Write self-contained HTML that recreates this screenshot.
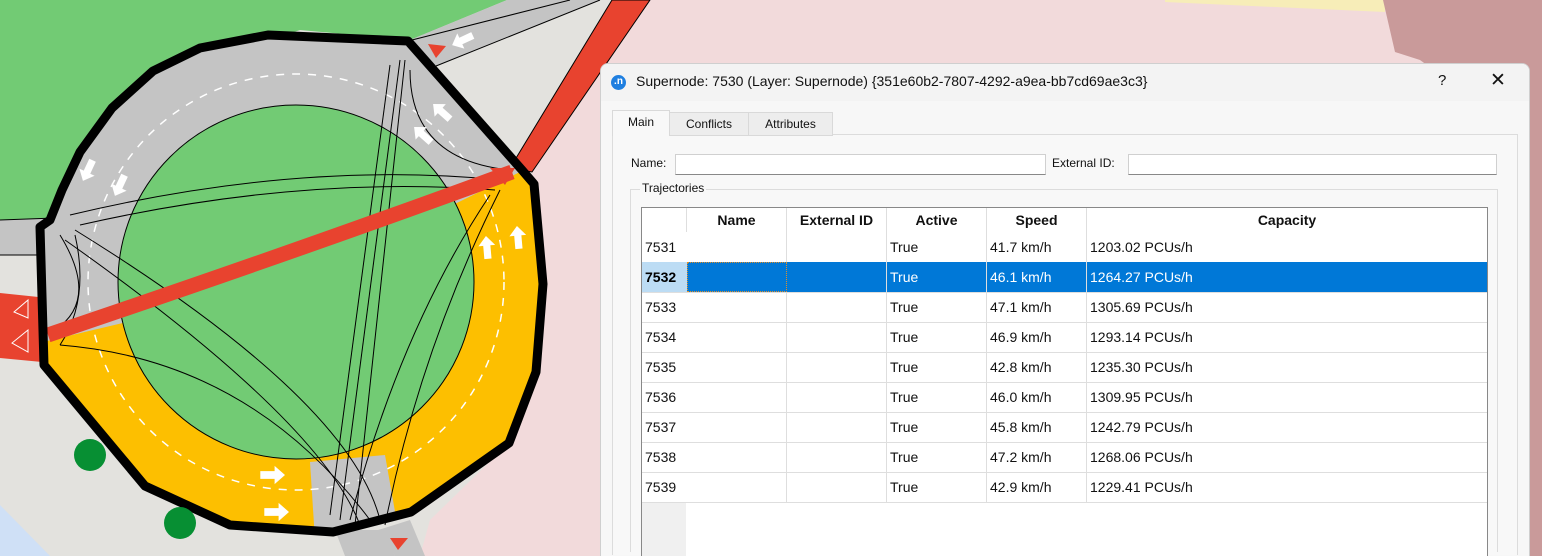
<!DOCTYPE html>
<html><head><meta charset="utf-8"><style>
html,body{margin:0;width:1542px;height:556px;overflow:hidden}
body{position:relative;font-family:"Segoe UI","Liberation Sans",sans-serif;background:#e3e2de}
svg{position:absolute;left:0;top:0}
.dlg{position:absolute;left:600px;top:63px;width:930px;height:493px;background:#f7f7f7;border-radius:8px 8px 0 0;border:1px solid #cfcfcf;border-bottom:none;box-sizing:border-box;overflow:hidden;font-size:12.5px;color:#111}
.tb{height:37px;background:#f3f3f3;position:relative}
.tb .t{position:absolute;left:35px;top:9px;font-size:14px}
.ic{position:absolute;left:10px;top:11px;width:15px;height:15px;border-radius:50%;background:#1f7fe0;color:#fff;font-size:10px;line-height:14px;text-align:center;font-weight:bold}
.tab{position:absolute;top:48px;height:22px;border:1px solid #d9d9d9;background:#ededed;line-height:22px;text-align:center;font-size:12px}
.pane{position:absolute;left:11px;top:70px;width:904px;height:420px;border:1px solid #dcdcdc;border-bottom:none;background:#f8f8f8}
.inp{position:absolute;top:90px;height:19px;background:#fff;border:1px solid #d0d0d0;border-bottom-color:#888}
.lbl{position:absolute;top:92px;font-size:12px}
.grp{position:absolute;left:29px;top:125px;width:866px;height:362px;border:1px solid #dcdcdc;border-bottom:none}
.tbl{position:absolute;left:40px;top:143px;width:845px;height:348px;background:#fff;border:1px solid #888;border-bottom:none;overflow:hidden}
.row{position:absolute;left:0;height:30px;width:845px;border-bottom:1px solid #dedede}
.c{position:absolute;top:0;height:30px;line-height:30px;font-size:14px;border-right:1px solid #dedede;box-sizing:border-box;padding-left:3px}
.h{font-weight:bold;text-align:center;padding:0;line-height:24px}
</style></head><body>
<svg width="1542" height="556" viewBox="0 0 1542 556">
<defs>
<clipPath id="oct"><polygon points="40,227 44,365 145,486 230,525 333,532 411,512 509,443 536,372 543,284 534,184 522,170 408,41 268,35 200,48 153,71 112,108 80,152 62,190 50,220"/></clipPath>
<polygon id="ar" points="-9,-3 2,-3 2,-7 10,0 2,7 2,3 -9,3" fill="#fff"/>
</defs>
<rect width="1542" height="556" fill="#e3e2de"/>
<polygon points="650,0 1542,0 1542,556 420,556 430,520 509,443 536,372 543,284 534,184 532,172" fill="#f2dadb"/>
<polygon points="1165,0 1385,0 1385,12 1165,2" fill="#f7edb8"/>
<polygon points="1383,0 1542,0 1542,556 1530,556 1530,140 1420,60 1395,52" fill="#c99a9a"/>
<polygon points="0,0 507,0 410,40 300,30 150,80 70,170 48,222 0,222" fill="#72cb74"/>
<polygon points="507,0 600,0 436,66 405,42" fill="#c4c4c4"/>
<path d="M408,41 L570,0 M436,66 L600,0" stroke="#000" stroke-width="1"/>
<polygon points="0,220 55,218 52,255 0,255" fill="#c4c4c4"/>
<path d="M0,220 L55,218 M0,255 L52,255" stroke="#000" stroke-width="1"/>
<polygon points="335,530 380,530 395,556 345,556" fill="#c4c4c4"/>
<polygon points="378,530 410,520 425,556 395,556" fill="#c4c4c4"/>
<polygon points="0,293 48,298 42,362 0,358" fill="#e8432f"/>
<polygon points="510,168 612,0 650,0 532,172" fill="#e8432f" stroke="#000" stroke-width="1"/>
<g clip-path="url(#oct)">
<rect x="0" y="0" width="600" height="556" fill="#c4c4c4"/>
<polygon points="296,282 30,345 30,556 600,556 600,175 520,172" fill="#fdbf00"/>
<polygon points="310,462 385,455 400,540 315,540" fill="#c4c4c4"/>
<circle cx="296" cy="282" r="208" fill="none" stroke="#fff" stroke-width="1.5" stroke-dasharray="8,8"/>
</g>
<ellipse cx="296" cy="282" rx="178" ry="177" fill="#72cb74" stroke="#000" stroke-width="1"/>
<g stroke="#000" stroke-width="1" fill="none">
<path d="M70,215 Q300,160 500,180"/><path d="M80,225 Q300,175 495,190"/>
<path d="M75,230 Q350,400 380,520"/><path d="M65,240 Q320,420 360,525"/>
<path d="M400,60 L340,520"/><path d="M405,60 L355,525"/><path d="M390,65 L330,515"/>
<path d="M500,190 Q420,350 385,525"/><path d="M490,195 Q400,330 350,520"/>
<path d="M60,345 Q250,360 370,520"/><path d="M410,70 Q410,160 510,170"/>
<path d="M60,235 Q100,300 55,330"/><path d="M75,235 Q90,300 60,345"/>
</g>
<path d="M48,335 Q300,250 512,172" stroke="#e8432f" stroke-width="15" fill="none"/>
<polygon points="490,168 515,168 505,185" fill="#e8432f"/>
<polygon points="40,227 44,365 145,486 230,525 333,532 411,512 509,443 536,372 543,284 534,184 522,170 408,41 268,35 200,48 153,71 112,108 80,152 62,190 50,220" fill="none" stroke="#000" stroke-width="9" stroke-linejoin="round"/>
<use href="#ar" transform="translate(463,40) rotate(155) scale(1.2)"/>
<use href="#ar" transform="translate(442,112) rotate(222) scale(1.2)"/>
<use href="#ar" transform="translate(423,135) rotate(222) scale(1.2)"/>
<use href="#ar" transform="translate(88,170) rotate(115) scale(1.2)"/>
<use href="#ar" transform="translate(120,185) rotate(115) scale(1.2)"/>
<use href="#ar" transform="translate(487,248) rotate(265) scale(1.2)"/>
<use href="#ar" transform="translate(518,238) rotate(265) scale(1.2)"/>
<use href="#ar" transform="translate(272,475) scale(1.3)"/>
<use href="#ar" transform="translate(276,512) scale(1.3)"/>
<polygon points="428,44 446,46 436,58" fill="#e8432f"/>
<polygon points="390,538 408,538 398,550" fill="#e8432f"/>
<g fill="none" stroke="#fff" stroke-width="1"><polygon points="28,300 14,312 28,318"/><polygon points="28,330 12,343 28,352"/></g>
<g fill="#078f33"><circle cx="90" cy="455" r="16"/><circle cx="180" cy="523" r="16"/><path d="M16,556 A14,10 0 0 1 44,556 Z"/></g>
<polygon points="0,505 50,556 0,556" fill="#cfe0f6"/>
</svg>
<div class="dlg">
<div class="tb"><div class="ic">.n</div><div class="t">Supernode: 7530 (Layer: Supernode) {351e60b2-7807-4292-a9ea-bb7cd69ae3c3}</div>
<div style="position:absolute;left:837px;top:8px;font-size:15px">?</div>
<div style="position:absolute;left:889px;top:5px;font-size:19px;font-weight:300">✕</div></div>
<div class="pane"></div>
<div class="tab" style="left:11px;width:56px;background:#f8f8f8;border-bottom:none;top:46px;height:25px">Main</div>
<div class="tab" style="left:68px;width:78px">Conflicts</div>
<div class="tab" style="left:147px;width:83px">Attributes</div>
<div class="lbl" style="left:30px">Name:</div>
<div class="inp" style="left:74px;width:369px"></div>
<div class="lbl" style="left:451px">External ID:</div>
<div class="inp" style="left:527px;width:367px"></div>
<div class="grp"></div>
<div style="position:absolute;left:39px;top:117px;background:#f8f8f8;padding:0 2px;font-size:12px">Trajectories</div>
<div class="tbl">
<div style="position:absolute;left:0;top:294px;width:44px;height:54px;background:#f0f0f0"></div>
<div class="row" style="top:0;height:24px;border:none">
<div class="c h" style="left:0;width:45px;height:24px"></div><div class="c h" style="left:45px;width:100px;height:24px">Name</div><div class="c h" style="left:145px;width:100px;height:24px">External ID</div><div class="c h" style="left:245px;width:100px;height:24px">Active</div><div class="c h" style="left:345px;width:100px;height:24px">Speed</div><div class="c h" style="left:445px;width:400px;border:none;height:24px">Capacity</div></div>
<div class="row" style="top:24px"><div class="c" style="left:0;width:45px;border:none">7531</div><div class="c" style="left:45px;width:100px"></div><div class="c" style="left:145px;width:100px"></div><div class="c" style="left:245px;width:100px">True</div><div class="c" style="left:345px;width:100px">41.7 km/h</div><div class="c" style="left:445px;width:400px;border:none">1203.02 PCUs/h</div></div>
<div class="row" style="top:54px;background:#0078d7;color:#fff"><div class="c" style="left:0;width:45px;border:none;background:#bcdcf4;color:#000;font-weight:bold">7532</div><div class="c" style="left:45px;width:100px;border:1px dotted #e0902a"></div><div class="c" style="left:145px;width:100px"></div><div class="c" style="left:245px;width:100px">True</div><div class="c" style="left:345px;width:100px">46.1 km/h</div><div class="c" style="left:445px;width:400px;border:none">1264.27 PCUs/h</div></div>
<div class="row" style="top:84px"><div class="c" style="left:0;width:45px;border:none">7533</div><div class="c" style="left:45px;width:100px"></div><div class="c" style="left:145px;width:100px"></div><div class="c" style="left:245px;width:100px">True</div><div class="c" style="left:345px;width:100px">47.1 km/h</div><div class="c" style="left:445px;width:400px;border:none">1305.69 PCUs/h</div></div>
<div class="row" style="top:114px"><div class="c" style="left:0;width:45px;border:none">7534</div><div class="c" style="left:45px;width:100px"></div><div class="c" style="left:145px;width:100px"></div><div class="c" style="left:245px;width:100px">True</div><div class="c" style="left:345px;width:100px">46.9 km/h</div><div class="c" style="left:445px;width:400px;border:none">1293.14 PCUs/h</div></div>
<div class="row" style="top:144px"><div class="c" style="left:0;width:45px;border:none">7535</div><div class="c" style="left:45px;width:100px"></div><div class="c" style="left:145px;width:100px"></div><div class="c" style="left:245px;width:100px">True</div><div class="c" style="left:345px;width:100px">42.8 km/h</div><div class="c" style="left:445px;width:400px;border:none">1235.30 PCUs/h</div></div>
<div class="row" style="top:174px"><div class="c" style="left:0;width:45px;border:none">7536</div><div class="c" style="left:45px;width:100px"></div><div class="c" style="left:145px;width:100px"></div><div class="c" style="left:245px;width:100px">True</div><div class="c" style="left:345px;width:100px">46.0 km/h</div><div class="c" style="left:445px;width:400px;border:none">1309.95 PCUs/h</div></div>
<div class="row" style="top:204px"><div class="c" style="left:0;width:45px;border:none">7537</div><div class="c" style="left:45px;width:100px"></div><div class="c" style="left:145px;width:100px"></div><div class="c" style="left:245px;width:100px">True</div><div class="c" style="left:345px;width:100px">45.8 km/h</div><div class="c" style="left:445px;width:400px;border:none">1242.79 PCUs/h</div></div>
<div class="row" style="top:234px"><div class="c" style="left:0;width:45px;border:none">7538</div><div class="c" style="left:45px;width:100px"></div><div class="c" style="left:145px;width:100px"></div><div class="c" style="left:245px;width:100px">True</div><div class="c" style="left:345px;width:100px">47.2 km/h</div><div class="c" style="left:445px;width:400px;border:none">1268.06 PCUs/h</div></div>
<div class="row" style="top:264px"><div class="c" style="left:0;width:45px;border:none">7539</div><div class="c" style="left:45px;width:100px"></div><div class="c" style="left:145px;width:100px"></div><div class="c" style="left:245px;width:100px">True</div><div class="c" style="left:345px;width:100px">42.9 km/h</div><div class="c" style="left:445px;width:400px;border:none">1229.41 PCUs/h</div></div>
</div>
</div>
</body></html>
